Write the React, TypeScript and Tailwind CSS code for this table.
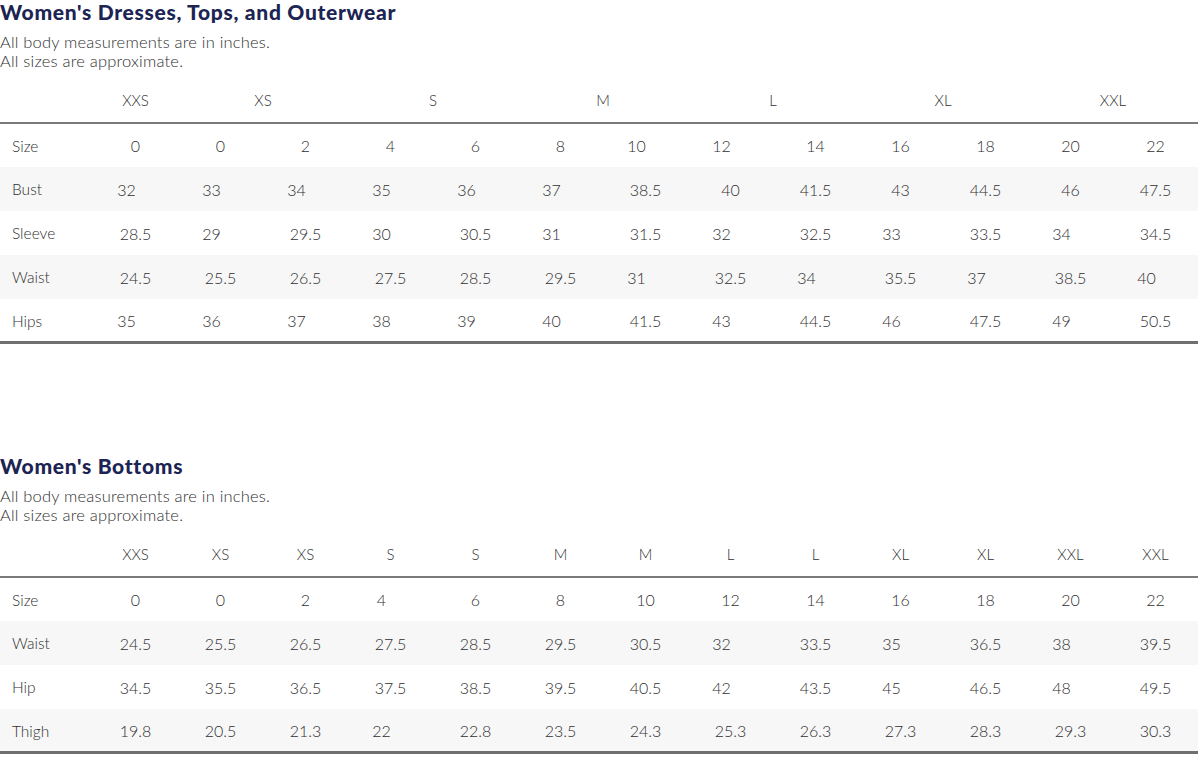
import React from "react";

type Cell = { v: string; s?: boolean };

// s = value sits a little left of the column centre, as in the reference
const c = (v: string): Cell => ({ v });
const s = (v: string): Cell => ({ v, s: true });

interface Row {
  label: string;
  cells: Cell[];
}

const topHeaders = [
  { label: "XXS", span: 1 },
  { label: "XS", span: 2 },
  { label: "S", span: 2 },
  { label: "M", span: 2 },
  { label: "L", span: 2 },
  { label: "XL", span: 2 },
  { label: "XXL", span: 2 },
];

const topRows: Row[] = [
  {
    label: "Size",
    cells: [c("0"), c("0"), c("2"), c("4"), c("6"), c("8"), s("10"), s("12"), c("14"), c("16"), c("18"), c("20"), c("22")],
  },
  {
    label: "Bust",
    cells: [s("32"), s("33"), s("34"), s("35"), s("36"), s("37"), c("38.5"), c("40"), c("41.5"), c("43"), c("44.5"), c("46"), c("47.5")],
  },
  {
    label: "Sleeve",
    cells: [c("28.5"), s("29"), c("29.5"), s("30"), c("30.5"), s("31"), c("31.5"), s("32"), c("32.5"), s("33"), c("33.5"), s("34"), c("34.5")],
  },
  {
    label: "Waist",
    cells: [c("24.5"), c("25.5"), c("26.5"), c("27.5"), c("28.5"), c("29.5"), s("31"), c("32.5"), s("34"), c("35.5"), s("37"), c("38.5"), s("40")],
  },
  {
    label: "Hips",
    cells: [s("35"), s("36"), s("37"), s("38"), s("39"), s("40"), c("41.5"), s("43"), c("44.5"), s("46"), c("47.5"), s("49"), c("50.5")],
  },
];

const bottomHeaders = ["XXS", "XS", "XS", "S", "S", "M", "M", "L", "L", "XL", "XL", "XXL", "XXL"].map(
  (label) => ({ label, span: 1 })
);

const bottomRows: Row[] = [
  {
    label: "Size",
    cells: [c("0"), c("0"), c("2"), s("4"), c("6"), c("8"), c("10"), c("12"), c("14"), c("16"), c("18"), c("20"), c("22")],
  },
  {
    label: "Waist",
    cells: [c("24.5"), c("25.5"), c("26.5"), c("27.5"), c("28.5"), c("29.5"), c("30.5"), s("32"), c("33.5"), s("35"), c("36.5"), s("38"), c("39.5")],
  },
  {
    label: "Hip",
    cells: [c("34.5"), c("35.5"), c("36.5"), c("37.5"), c("38.5"), c("39.5"), c("40.5"), s("42"), c("43.5"), s("45"), c("46.5"), s("48"), c("49.5")],
  },
  {
    label: "Thigh",
    cells: [c("19.8"), c("20.5"), c("21.3"), s("22"), c("22.8"), c("23.5"), c("24.3"), c("25.3"), c("26.3"), c("27.3"), c("28.3"), c("29.3"), c("30.3")],
  },
];

function SizeTable({
  title,
  headers,
  rows,
}: {
  title: string;
  headers: { label: string; span: number }[];
  rows: Row[];
}) {
  return (
    <section>
      <h2 className="text-[21px] leading-[24px] font-black text-[#1b2452] tracking-[0.7px]">
        {title}
      </h2>
      <p className="mt-[9px] text-[16.5px] leading-[19px] font-light text-[#2f2f2f] tracking-[0.2px]">
        All body measurements are in inches.
        <br />
        All sizes are approximate.
      </p>

      <table className="mt-[7.5px] w-[1198px] table-fixed border-collapse">
        <colgroup>
          <col className="w-[93px]" />
          {Array.from({ length: 13 }).map((_, i) => (
            <col key={i} className="w-[85px]" />
          ))}
        </colgroup>
        <thead>
          <tr className="h-[44px] border-b-2 border-[#7a7a7a]">
            <th />
            {headers.map((h, i) => (
              <th
                key={i}
                colSpan={h.span}
                className="text-center text-[15px] font-light text-[#2f2f2f]"
              >
                {h.label}
              </th>
            ))}
          </tr>
        </thead>
        <tbody>
          {rows.map((row, ri) => (
            <tr
              key={row.label}
              className={
                "h-[44px] " +
                (ri % 2 === 1 ? "bg-[#f7f7f7]" : "bg-white") +
                (ri === rows.length - 1 ? " border-b-[3px] border-[#6f6f6f]" : "")
              }
            >
              <td className="pl-[12px] pt-[3px] text-left text-[15.5px] font-light text-[#2f2f2f]">
                {row.label}
              </td>
              {row.cells.map((cell, ci) => (
                <td
                  key={ci}
                  className={
                    "pt-[2px] text-center text-[16px] font-light text-[#2f2f2f] " +
                    (cell.s ? "pr-[18px]" : "")
                  }
                >
                  {cell.v}
                </td>
              ))}
            </tr>
          ))}
        </tbody>
      </table>
    </section>
  );
}

export default function App() {
  return (
    <div className="w-[1200px] h-[760px] overflow-hidden bg-white font-['Lato','Liberation_Sans',sans-serif]">
      <SizeTable
        title="Women's Dresses, Tops, and Outerwear"
        headers={topHeaders}
        rows={topRows}
      />
      <div className="h-[110px]" />
      <SizeTable title="Women's Bottoms" headers={bottomHeaders} rows={bottomRows} />
    </div>
  );
}
